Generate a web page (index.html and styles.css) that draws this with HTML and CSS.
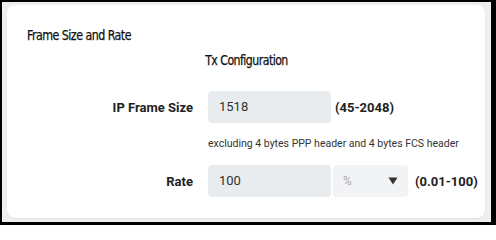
FILE: index.html
```html
<!DOCTYPE html>
<html>
<head>
<meta charset="utf-8">
<link rel="stylesheet" href="styles.css">
</head>
<body>
<div class="frame">
  <div class="card">
    <div class="title-wrap"><h2 class="title">Frame Size and Rate</h2></div>
    <div class="subtitle-wrap"><h3 class="subtitle">Tx Configuration</h3></div>
    <div class="row">
      <label class="label">IP Frame Size</label>
      <div class="input">1518</div>
      <span class="range range-a">(45-2048)</span>
    </div>
    <div class="help">excluding 4 bytes PPP header and 4 bytes FCS header</div>
    <div class="row">
      <label class="label">Rate</label>
      <div class="input">100</div>
      <div class="select"><span class="unit">%</span><svg class="caret" width="10" height="8" viewBox="0 0 10 8"><path d="M0.5 0.5H9.5L5 7.5Z" fill="#333"/></svg></div>
      <span class="range range-b">(0.01-100)</span>
    </div>
  </div>
</div>
</body>
</html>
```
FILE: styles.css
```css
html, body {
  margin: 0;
  padding: 0;
  background: #fff;
}
.frame {
  box-sizing: border-box;
  width: 496px;
  height: 225px;
  border-style: solid;
  border-color: #000;
  border-width: 2px 5px 3px 2px;
  background: #efefef;
  padding: 3px 6px 4px 5px;
}
.card {
  box-sizing: border-box;
  height: 213px;
  background: #fff;
  border-radius: 8px;
  box-shadow: 0 1px 2px rgba(0,0,0,0.06);
  padding-top: 20px;
  font-family: Roboto, "Liberation Sans", sans-serif;
  color: #222;
}
.title-wrap {
  padding-left: 20px;
}
.title,
.subtitle {
  display: inline-block;
  margin: 0;
  font-family: "DejaVu Sans Condensed", "DejaVu Sans", sans-serif;
  font-weight: normal;
  font-size: 14px;
  letter-spacing: -0.6px;
  line-height: 20px;
  color: #111;
  -webkit-text-stroke: 0.25px #111;
}
.title {
  transform: scaleX(0.88);
  transform-origin: left center;
}
.subtitle-wrap {
  margin-top: 5px;
  text-align: center;
}
.subtitle {
  transform: scaleX(0.87);
  transform-origin: center center;
}
.row {
  display: flex;
  align-items: center;
  height: 32px;
}
.subtitle-wrap + .row {
  margin-top: 21px;
}
.label {
  box-sizing: border-box;
  width: 186px;
  text-align: right;
  font-weight: bold;
  font-size: 13px;
  margin-right: 15px;
}
.input {
  box-sizing: border-box;
  width: 123px;
  height: 32px;
  background: #e9ecef;
  border-radius: 4px;
  padding-left: 11px;
  font-size: 13px;
  line-height: 32px;
  color: #333;
}
.range {
  font-weight: bold;
  font-size: 13px;
  color: #222;
}
.range-a {
  margin-left: 4px;
}
.range-b {
  margin-left: 7px;
}
.select {
  box-sizing: border-box;
  width: 75px;
  height: 32px;
  margin-left: 2px;
  background: #f1f3f5;
  border-radius: 4px;
  display: flex;
  align-items: center;
  justify-content: space-between;
  padding: 0 10px 0 10px;
}
.unit {
  font-size: 12px;
  color: #aaa;
}
.caret {
  display: block;
}
.help {
  margin: 14px 0 0 201px;
  font-size: 10.5px;
  line-height: 14px;
  color: #333;
}
.help + .row {
  margin-top: 14px;
}
```
